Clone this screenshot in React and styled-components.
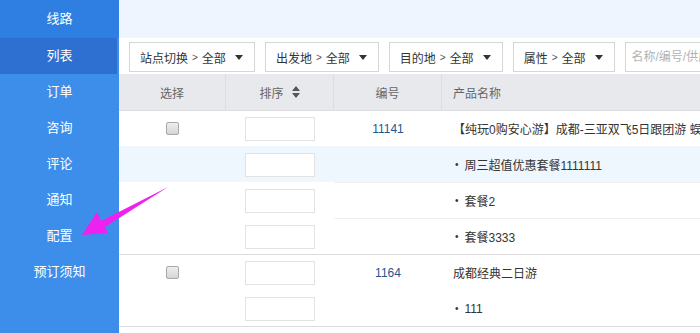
import React from "react";
import styled, { createGlobalStyle } from "styled-components";

const GlobalStyle = createGlobalStyle`
    html, body {
        margin: 0;
        padding: 0;
        overflow: hidden;
    }
    body {
        font-family: "Liberation Sans", "Noto Sans CJK SC", sans-serif;
        font-size: 12px;
        color: #333;
        background: #fff;
    }
`;

const menu = ["线路", "列表", "订单", "咨询", "评论", "通知", "配置", "预订须知"];

const groups = [
    {
        id: "11141",
        name: "【纯玩0购安心游】成都-三亚双飞5日跟团游 蜈支洲岛+亚龙湾热带天堂",
        subs: ["周三超值优惠套餐1111111", "套餐2", "套餐3333"],
        hover: 1,
    },
    {
        id: "1164",
        name: "成都经典二日游",
        subs: ["111"],
        hover: -1,
    },
];

const filters = ["站点切换", "出发地", "目的地", "属性"];

const App = () => {
    return (
        <Page>
            <GlobalStyle />
            <Sidebar>
                {menu.map((item, i) => (
                    <MenuItem key={item} $first={i === 0} $active={i === 1}>
                        {item}
                    </MenuItem>
                ))}
            </Sidebar>
            <Main>
                <TopStrip />
                <FilterBar>
                    {filters.map((f) => (
                        <FilterButton key={f}>
                            {f}
                            <span className="sep">&gt;</span>
                            全部
                            <Caret />
                        </FilterButton>
                    ))}
                    <Search placeholder="名称/编号/供应商" />
                </FilterBar>
                <Grid>
                    <HeadCell>选择</HeadCell>
                    <HeadCell>
                        排序
                        <SortIcon viewBox="0 0 8 12">
                            <path d="M4 0 L8 5 L0 5 Z M4 12 L8 7 L0 7 Z" fill="#555" />
                        </SortIcon>
                    </HeadCell>
                    <HeadCell>编号</HeadCell>
                    <HeadCell $left $last>产品名称</HeadCell>
                    {groups.map((g) => {
                        const rows = [g.name, ...g.subs];
                        return rows.map((text, r) => {
                            const hover = r === g.hover;
                            const top = r === 0;
                            const line = r > 1;
                            return (
                                <React.Fragment key={g.id + r}>
                                    <Cell $hover={hover} $groupTop={top}>
                                        {top && <Check />}
                                    </Cell>
                                    <Cell $hover={hover} $groupTop={top}>
                                        <SortInput />
                                    </Cell>
                                    <Cell $hover={hover} $groupTop={top} $subLine={line}>
                                        {top && <Code>{g.id}</Code>}
                                    </Cell>
                                    <Cell $hover={hover} $groupTop={top} $subLine={line} $left>
                                        {top ? (
                                            <Name>{text}</Name>
                                        ) : (
                                            <Sub>
                                                <i>•</i>
                                                {text}
                                            </Sub>
                                        )}
                                    </Cell>
                                </React.Fragment>
                            );
                        });
                    })}
                    <EndLine />
                </Grid>
            </Main>
            <Arrow viewBox="0 0 700 333">
                <polygon
                    points="82,235 97,212 101,221 168,187 105,227 108,233"
                    fill="#ee22ee"
                />
            </Arrow>
        </Page>
    );
};

const Page = styled.div`
    position: relative;
    display: flex;
    width: 700px;
    height: 333px;
    overflow: hidden;
`;

const Sidebar = styled.nav`
    width: 119px;
    flex-shrink: 0;
    background: #3d8eea;
    display: flex;
    flex-direction: column;
`;

const MenuItem = styled.div`
    flex-shrink: 0;
    height: ${(p) => (p.$first ? "38px" : "36px")};
    line-height: ${(p) => (p.$first ? "38px" : "36px")};
    text-align: center;
    color: #fff;
    font-size: 13px;
    background: ${(p) => (p.$active ? "#2d70d2" : p.$first ? "#2f7fe2" : "transparent")};
    box-shadow: ${(p) => (p.$active ? "inset -2px 0 0 #3d8eea" : "none")};
`;

const Main = styled.main`
    flex: 1;
    min-width: 0;
    display: flex;
    flex-direction: column;
`;

const TopStrip = styled.div`
    flex-shrink: 0;
    height: 38px;
    background: #eef5fe;
`;

const FilterBar = styled.div`
    flex-shrink: 0;
    height: 36px;
    box-sizing: border-box;
    padding: 4px 0 2px 10px;
    display: flex;
    gap: 10px;
    white-space: nowrap;
    overflow: hidden;
    background: #fff;
`;

const FilterButton = styled.div`
    height: 30px;
    box-sizing: border-box;
    border: 1px solid #d6d6d6;
    padding: 0 11px 0 10px;
    display: flex;
    align-items: center;
    flex-shrink: 0;
    font-size: 12px;
    color: #333;

    .sep {
        font-size: 10px;
        margin: 0 4px;
        color: #555;
    }
`;

const Caret = styled.span`
    width: 0;
    height: 0;
    margin-left: 9px;
    border-left: 4px solid transparent;
    border-right: 4px solid transparent;
    border-top: 5px solid #333;
`;

const Search = styled.input`
    height: 30px;
    box-sizing: border-box;
    width: 160px;
    flex-shrink: 0;
    border: 1px solid #d6d6d6;
    padding: 0 6px;
    font-family: inherit;
    font-size: 12px;
    outline: none;

    &::placeholder {
        color: #b3b3b3;
    }
`;

const Grid = styled.div`
    flex-shrink: 0;
    display: grid;
    grid-template-columns: 107px 108px 108px 1fr;
    grid-auto-rows: 36px;
`;

const HeadCell = styled.div`
    background: #e7e9ed;
    color: #666;
    display: flex;
    align-items: center;
    justify-content: ${(p) => (p.$left ? "flex-start" : "center")};
    padding-left: ${(p) => (p.$left ? "11px" : "0")};
    border-right: ${(p) => (p.$last ? "none" : "1px solid #dadde3")};
    white-space: nowrap;
`;

const SortIcon = styled.svg`
    width: 8px;
    height: 12px;
    margin-left: 8px;
`;

const Cell = styled.div`
    box-sizing: border-box;
    display: flex;
    align-items: center;
    justify-content: ${(p) => (p.$left ? "flex-start" : "center")};
    padding-left: ${(p) => (p.$left ? "11px" : "0")};
    background: ${(p) => (p.$hover ? "#eef6fe" : "#fff")};
    border-top: 1px solid
        ${(p) => (p.$groupTop ? "#dedede" : p.$subLine ? "#f0f0f0" : "transparent")};
    white-space: nowrap;
    overflow: hidden;
`;

const Check = styled.span`
    width: 11px;
    height: 11px;
    border: 1px solid #a8a8a8;
    border-radius: 2px;
    background: linear-gradient(#eeeeee, #d6d6d6);
`;

const SortInput = styled.div`
    width: 70px;
    height: 24px;
    box-sizing: border-box;
    border: 1px solid #e3e3e3;
    background: #fff;
`;

const Code = styled.span`
    color: #24558e;
`;

const Name = styled.span`
    color: #333;
`;

const Sub = styled.span`
    color: #333;
    display: flex;
    align-items: center;

    i {
        font-style: normal;
        font-size: 10px;
        margin: 0 6px 0 2px;
    }
`;

const EndLine = styled.div`
    grid-column: 1 / -1;
    border-top: 1px solid #dedede;
`;

const Arrow = styled.svg`
    position: absolute;
    left: 0;
    top: 0;
    width: 700px;
    height: 333px;
    pointer-events: none;
`;

export default App;
